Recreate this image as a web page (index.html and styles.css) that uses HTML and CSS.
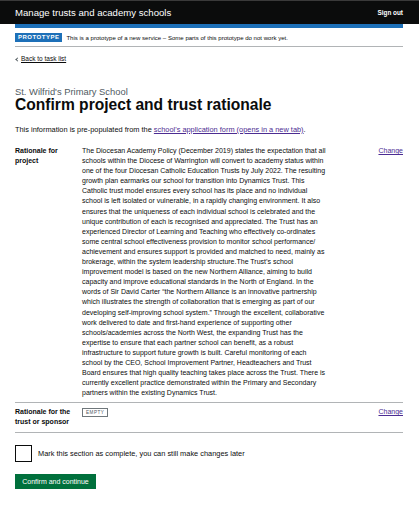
FILE: index.html
```html
<!DOCTYPE html>
<html lang="en">
<head>
<meta charset="utf-8">
<title>Confirm project and trust rationale</title>
<link rel="stylesheet" href="styles.css">
</head>
<body>
<header class="header">
  <div class="header-inner">
    <span class="service-name">Manage trusts and academy schools</span>
    <a class="sign-out" href="#">Sign out</a>
  </div>
</header>
<div class="container">
  <div class="blue-bar"></div>
  <div class="phase-banner">
    <strong class="phase-tag">PROTOTYPE</strong>
    <span class="phase-text">This is a prototype of a new service – Some parts of this prototype do not work yet.</span>
  </div>
  <a class="back-link" href="#">Back to task list</a>
  <main class="main">
    <span class="caption">St. Wilfrid's Primary School</span>
    <h1 class="heading">Confirm project and trust rationale</h1>
    <p class="intro">This information is pre-populated from the <a class="link" href="#">school's application form (opens in a new tab)</a>.</p>
    <dl class="summary">
      <div class="summary-row">
        <dt class="summary-key">Rationale for project</dt>
        <dd class="summary-value summary-value--text">The Diocesan Academy Policy (December 2019) states the expectation that all
schools within the Diocese of Warrington will convert to academy status within
one of the four Diocesan Catholic Education Trusts by July 2022. The resulting
growth plan earmarks our school for transition into Dynamics Trust. This
Catholic trust model ensures every school has its place and no individual
school is left isolated or vulnerable, in a rapidly changing environment. It also
ensures that the uniqueness of each individual school is celebrated and the
unique contribution of each is recognised and appreciated. The Trust has an
experienced Director of Learning and Teaching who effectively co-ordinates
some central school effectiveness provision to monitor school performance/
achievement and ensures support is provided and matched to need, mainly as
brokerage, within the system leadership structure.The Trust’s school
improvement model is based on the new Northern Alliance, aiming to build
capacity and improve educational standards in the North of England. In the
words of Sir David Carter “the Northern Alliance is an innovative partnership
which illustrates the strength of collaboration that is emerging as part of our
developing self-improving school system.” Through the excellent, collaborative
work delivered to date and first-hand experience of supporting other
schools/academies across the North West, the expanding Trust has the
expertise to ensure that each partner school can benefit, as a robust
infrastructure to support future growth is built. Careful monitoring of each
school by the CEO, School Improvement Partner, Headteachers and Trust
Board ensures that high quality teaching takes place across the Trust. There is
currently excellent practice demonstrated within the Primary and Secondary
partners within the existing Dynamics Trust.</dd>
        <dd class="summary-actions"><a class="link" href="#">Change</a></dd>
      </div>
      <div class="summary-row">
        <dt class="summary-key">Rationale for the trust or sponsor</dt>
        <dd class="summary-value"><strong class="empty-tag">EMPTY</strong></dd>
        <dd class="summary-actions"><a class="link" href="#">Change</a></dd>
      </div>
    </dl>
    <div class="checkbox-item">
      <input class="checkbox-input" type="checkbox" id="complete">
      <label class="checkbox-label" for="complete">Mark this section as complete, you can still make changes later</label>
    </div>
    <button class="button" type="button">Confirm and continue</button>
  </main>
</div>
</body>
</html>
```
FILE: styles.css
```css
* { box-sizing: border-box; }
html, body { margin: 0; padding: 0; background: #fff; }
body {
  font-family: "Liberation Sans", Arial, sans-serif;
  color: #0b0c0c;
}
a { color: inherit; }

.header {
  background: #0b0c0c;
  border-top: 1px solid #3a3a3a;
  height: 24px;
}
.header-inner {
  display: flex;
  align-items: center;
  justify-content: space-between;
  height: 23px;
  padding: 0 16px 0 15px;
}
.service-name {
  color: #fff;
  font-size: 9.6px;
}
.sign-out {
  color: #fff;
  font-weight: bold;
  font-size: 6.4px;
  text-decoration: none;
}

.container {
  padding: 0 16px 0 15px;
}
.blue-bar {
  height: 4px;
  background: #1d70b8;
}
.phase-banner {
  display: flex;
  align-items: center;
  gap: 4px;
  padding: 5px 0 4px;
  border-bottom: 1px solid #b1b4b6;
}
.phase-tag {
  background: #1d70b8;
  color: #fff;
  font-size: 6px;
  letter-spacing: 0.5px;
  line-height: 9px;
  padding: 0 3px;
  font-weight: bold;
}
.phase-text {
  font-size: 6.05px;
}
.back-link {
  display: inline-block;
  margin-top: 5px;
  font-size: 6.5px;
  line-height: 8px;
  padding-left: 6px;
  position: relative;
  text-decoration: underline;
}
.back-link::before {
  content: "";
  position: absolute;
  left: 1px;
  top: 3px;
  width: 2px;
  height: 2px;
  border-left: 1px solid #505a5f;
  border-bottom: 1px solid #505a5f;
  transform: rotate(45deg);
}

.main {
  padding-top: 21px;
}
.caption {
  display: block;
  color: #505a5f;
  font-size: 9.4px;
  line-height: 11px;
}
.heading {
  margin: -1px 0 0;
  font-size: 15.6px;
  line-height: 17px;
  font-weight: bold;
}
.intro {
  margin: 12px 0 0;
  font-size: 7.4px;
  line-height: 9px;
}
.link {
  color: #4c2c92;
  text-decoration: underline;
}

.summary {
  margin: 8px 0 0;
  font-size: 7px;
  line-height: 10.1px;
}
.summary-row {
  display: flex;
  border-bottom: 1px solid #b1b4b6;
  padding: 4px 0;
}
.summary-key {
  width: 67px;
  flex: none;
  font-weight: bold;
  padding-right: 8px;
}
.summary-value {
  margin: 0;
  width: 270px;
  flex: none;
}
.summary-value--text {
  white-space: pre-line;
}
.summary-actions {
  margin: 0;
  flex: 1;
  text-align: right;
}
.empty-tag {
  display: inline-block;
  border: 1px solid #6f777b;
  color: #505a5f;
  font-size: 4.6px;
  line-height: 7px;
  letter-spacing: 0.5px;
  padding: 0 3px;
  margin-top: 1px;
  font-weight: normal;
}

.checkbox-item {
  display: flex;
  align-items: center;
  gap: 6px;
  margin-top: 12px;
}
.checkbox-input {
  appearance: none;
  -webkit-appearance: none;
  margin: 0;
  width: 17px;
  height: 17px;
  border: 1px solid #0b0c0c;
  background: #fff;
}
.checkbox-label {
  font-size: 7.4px;
  color: #0b0c0c;
}
.button {
  margin-top: 12px;
  display: inline-block;
  background: #00703c;
  color: #fff;
  border: 0;
  box-shadow: 0 1px 0 #002d18;
  font-family: "Liberation Sans", Arial, sans-serif;
  font-size: 7px;
  line-height: 9px;
  padding: 3px 0;
  height: 15px;
  width: 81px;
  text-align: center;
}
```
